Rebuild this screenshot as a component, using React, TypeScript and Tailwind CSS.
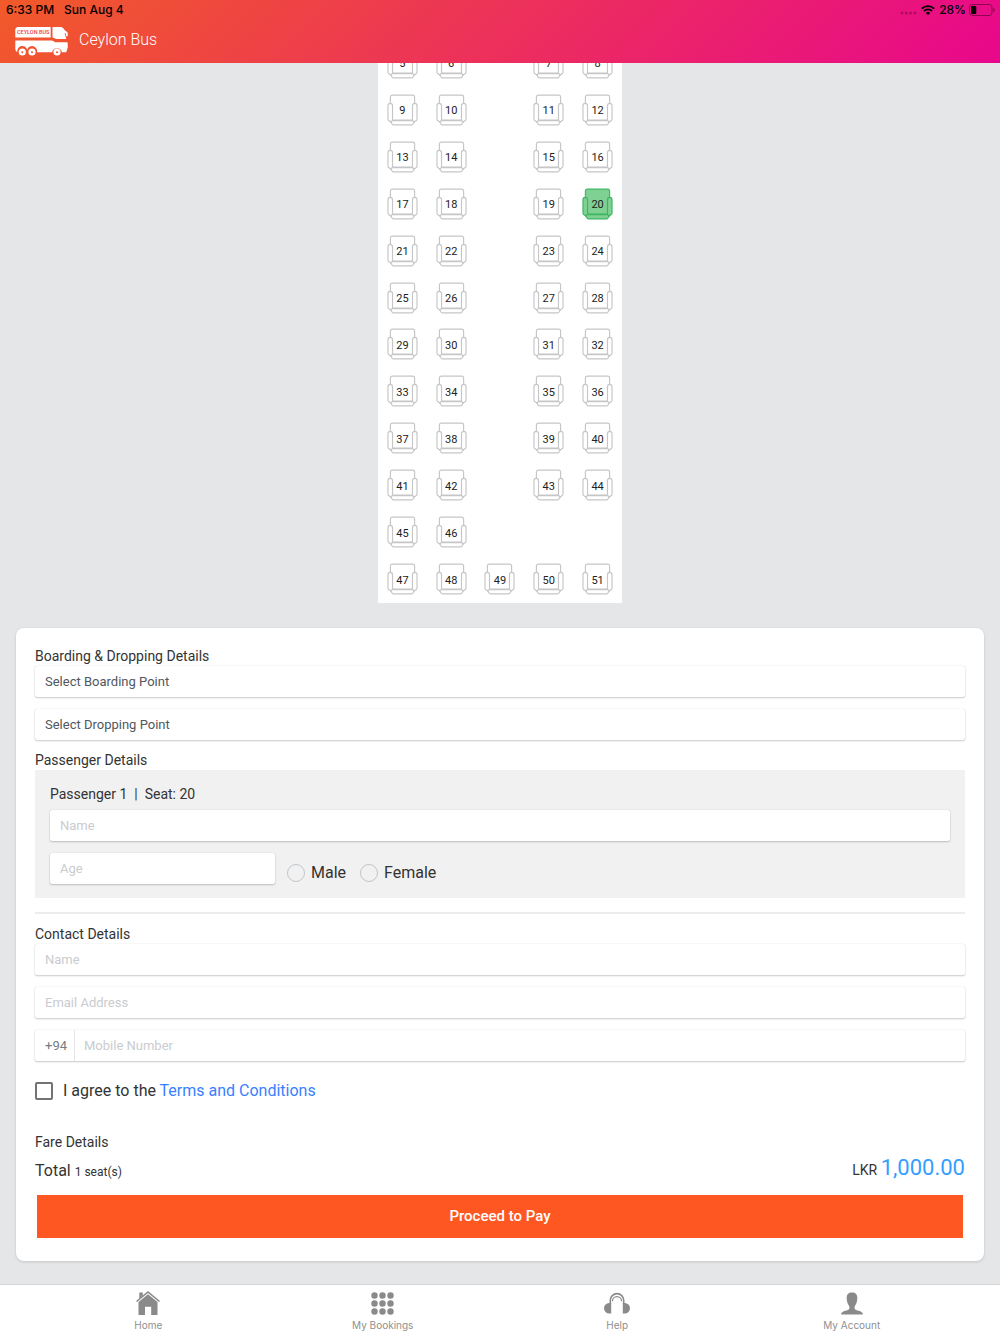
import React from 'react';

const seatRows: (number | null)[][] = [
  [5, 6, null, 7, 8],
  [9, 10, null, 11, 12],
  [13, 14, null, 15, 16],
  [17, 18, null, 19, 20],
  [21, 22, null, 23, 24],
  [25, 26, null, 27, 28],
  [29, 30, null, 31, 32],
  [33, 34, null, 35, 36],
  [37, 38, null, 39, 40],
  [41, 42, null, 43, 44],
  [45, 46, null, null, null],
  [47, 48, 49, 50, 51],
];

const fieldBox =
  'h-[31px] w-full rounded-xs bg-white px-2.5 text-[13px] shadow-[0_0_1px_rgba(0,0,0,0.2),0_1px_2px_rgba(0,0,0,0.2)] outline-none placeholder:text-[#c9cccf]';

function Seat({ number, selected }: { number: number; selected: boolean }) {
  return (
    <button
      type="button"
      aria-pressed={selected}
      aria-label={`Seat ${number}`}
      className="grid size-[31px] place-items-center"
    >
      <svg
        viewBox="0 1 32 32"
        className={
          selected
            ? 'col-start-1 row-start-1 size-[31px] overflow-visible fill-[#7fd093] stroke-[#3fb562]'
            : 'col-start-1 row-start-1 size-[31px] overflow-visible fill-white stroke-[#c6c6c8]'
        }
        strokeWidth="1.2"
        strokeLinejoin="round"
        aria-hidden="true"
      >
        <path d="M3.500 27V3.200a2 2 0 0 1 2-2h21a2 2 0 0 1 2 2V27z" />
        <path d="M5 27.500h22q1.200 0 1.200 1.200l-1.400 2.200q-.5 1-1.600 1H6.800q-1.100 0-1.600-1L3.800 28.700q0-1.200 1.200-1.200z" />
        <path d="M3.300 9.600q2.400 0 2.400 2.400v15l-1.700 1.900-2.300-1.500q-.7-.7-.7-1.700V12q0-2.400 2.300-2.400z" />
        <path d="M28.700 9.600q-2.400 0-2.400 2.400v15l1.700 1.900 2.300-1.500q.7-.7.7-1.700V12q0-2.400-2.300-2.400z" />
      </svg>
      <span className="col-start-1 row-start-1 pt-0.5 text-[11px] leading-4 text-[#222]">{number}</span>
    </button>
  );
}

function BusLogo() {
  return (
    <svg viewBox="0 0 54 31" className="h-[31px] w-[54px]" aria-hidden="true">
      <g fill="#fff">
        <path d="M3.500 2h32.200v10.500H.3V5.200Q.3 2 3.500 2z" />
        <path d="M37.500 2h8.500q2.500.2 3.800 3.200l2.700 2q.7 2.400-.2 4.300l-1.300-.4-.2-2.700-1.200-.4L51.300 14H41.500l-4-1.500z" />
        <path d="M.3 15.500H37l3.500 1.700h12q.5 3 .2 5.500l-1.500 4.500h-4.300a5 5 0 0 0-9.800 0H22a5 5 0 0 0-9.800-2.200A5 5 0 0 0 2.400 27Q.3 26.500.3 24z" />
        <circle cx="7.300" cy="27" r="3.600" />
        <circle cx="17" cy="27" r="3.600" />
        <circle cx="42" cy="27" r="3.600" />
      </g>
      <g fill="#f0542f">
        <circle cx="7.300" cy="27.300" r="1" />
        <circle cx="17" cy="27.300" r="1" />
        <circle cx="42" cy="27.300" r="1" />
      </g>
      <text x="2" y="9.300" fontSize="5.500" fontWeight="500" fontFamily="Roboto, sans-serif" fill="#ee3b4a">
        CEYLON BUS
      </text>
    </svg>
  );
}

function StatusBar() {
  return (
    <div className="flex h-5 items-center justify-between pr-[5px] pl-1.5 font-['Inter',sans-serif] text-xs font-medium text-black">
      <div className="flex gap-2.5">
        <span>6:33 PM</span>
        <span>Sun Aug 4</span>
      </div>
      <div className="flex items-center gap-1">
        <svg viewBox="0 0 17 4" className="mt-1.5 h-1 w-[17px]" fill="#000" fillOpacity="0.25" aria-hidden="true">
          <circle cx="2" cy="2" r="1.500" />
          <circle cx="6.300" cy="2" r="1.500" />
          <circle cx="10.600" cy="2" r="1.500" />
          <circle cx="14.900" cy="2" r="1.500" />
        </svg>
        <svg viewBox="0 0 14 10" className="h-2.5 w-3.5" fill="none" stroke="#000" strokeWidth="1.900" aria-hidden="true">
          <path d="M.8 3.700a8.800 8.800 0 0 1 12.400 0" />
          <path d="M3 6a5.700 5.700 0 0 1 8 0" />
          <path d="M7 10 4.900 7.900a3 3 0 0 1 4.200 0z" fill="#000" stroke="none" />
        </svg>
        <span>28%</span>
        <svg viewBox="0 0 26 12" className="-ml-px h-3 w-[26px]" aria-hidden="true">
          <rect x=".5" y=".5" width="22.500" height="11" rx="2.800" fill="none" stroke="#000" strokeOpacity="0.4" />
          <rect x="2" y="2" width="5.300" height="8" rx="1.300" />
          <path d="M24.300 4q1.500.5 1.500 2t-1.500 2z" fillOpacity="0.4" />
        </svg>
      </div>
    </div>
  );
}

function HomeIcon() {
  return (
    <svg viewBox="0 0 24 24" className="size-6" fill="#8a8a8a" aria-hidden="true">
      <path d="M3.300 1.600h3.500v3.200L3.300 8z" />
      <path d="M12 0 24 9.900l-1 1.200L12 2.100 1 11.100 0 9.900z" />
      <path d="M12 3.300 21.500 11.100V24h-6.300v-8.200H9V24H2.500V11.100z" />
    </svg>
  );
}

function GridIcon() {
  const steps = [3.5, 11.5, 19.5];
  return (
    <svg viewBox="0 0 23 23" className="size-[23px]" fill="#8a8a8a" aria-hidden="true">
      {steps.map((y) => steps.map((x) => <circle key={`${x}-${y}`} cx={x} cy={y} r="3.200" />))}
    </svg>
  );
}

function HelpIcon() {
  return (
    <svg viewBox="0 0 26 22" className="h-[22px] w-[26px]" aria-hidden="true">
      <path fill="#8a8a8a" d="M7.200 11v10.400H5.200a5.200 5.200 0 0 1 0-10.400zM18.800 11v10.400h2a5.200 5.200 0 0 0 0-10.400z" />
      <path fill="none" stroke="#8a8a8a" strokeWidth="1.600" d="M6.300 12V8.300a6.700 6.700 0 0 1 13.400 0V12" />
      <path fill="none" stroke="#8a8a8a" strokeWidth="1.200" d="M8.400 9.200a4.600 4.600 0 0 1 9.200 0" />
    </svg>
  );
}

function AccountIcon() {
  return (
    <svg viewBox="0 0 22 23" className="h-[23px] w-[22px]" fill="#8a8a8a" aria-hidden="true">
      <path d="M11 .5c3.500 0 5.500 2 5.300 5.500 0 2.500-.6 5.300-1.800 7-.8 1.200-1 1.600-.9 3 .1 1.400.8 2 2.800 2.500 3.600.8 5.300 1.600 5.600 4H0c.3-2.400 2-3.200 5.600-4 2-.5 2.700-1.100 2.800-2.500.1-1.400-.1-1.800-.9-3-1.200-1.700-1.800-4.500-1.800-7C5.500 2.500 7.500.5 11 .5z" />
    </svg>
  );
}

const tabs = [
  { label: 'Home', icon: <HomeIcon /> },
  { label: 'My Bookings', icon: <GridIcon /> },
  { label: 'Help', icon: <HelpIcon /> },
  { label: 'My Account', icon: <AccountIcon /> },
];

function GenderOption({ label }: { label: string }) {
  return (
    <label className="flex items-center gap-1.5 text-base text-[#333]">
      <input
        type="radio"
        name="gender"
        className="size-[18px] appearance-none rounded-full border border-[#c0c6ca] checked:border-[5px] checked:border-[#3b82f6]"
      />
      {label}
    </label>
  );
}

function SectionTitle({ children }: { children: React.ReactNode }) {
  return <h2 className="text-sm leading-5 text-[#333]">{children}</h2>;
}

export default function App() {
  return (
    <div className="flex min-h-screen flex-col bg-[#e5e6e8] font-['Roboto',sans-serif] text-[#333]">
      <header className="z-10 h-[63px] bg-[linear-gradient(135deg,#f15a29,#e8078c)]">
        <StatusBar />
        <div className="flex h-10 items-center gap-2.5 pl-[15px]">
          <BusLogo />
          <h1 className="text-base font-light text-white">Ceylon Bus</h1>
        </div>
      </header>

      <main className="flex-1 px-4 pb-[23px]">
        <section
          aria-label="Seat map"
          className="mx-auto -mt-[23px] grid h-[563px] w-[244px] auto-rows-fr bg-white"
        >
          {seatRows.map((row, r) => (
            <div key={r} className="grid grid-cols-5 place-items-center">
              {row.map((n, c) => (n === null ? <span key={c} /> : <Seat key={c} number={n} selected={n === 20} />))}
            </div>
          ))}
        </section>

        <form
          onSubmit={(e) => e.preventDefault()}
          className="mt-[25px] rounded-lg bg-white px-[19px] pt-[18px] pb-[23px] shadow-[0_1px_3px_rgba(0,0,0,0.15)]"
        >
          <SectionTitle>Boarding &amp; Dropping Details</SectionTitle>
          <div className="flex flex-col gap-3">
            <select aria-label="Boarding point" className={`${fieldBox} appearance-none text-[#50575e]`}>
              <option>Select Boarding Point</option>
            </select>
            <select aria-label="Dropping point" className={`${fieldBox} appearance-none text-[#50575e]`}>
              <option>Select Dropping Point</option>
            </select>
          </div>

          <div className="mt-2.5">
            <SectionTitle>Passenger Details</SectionTitle>
          </div>
          <div className="bg-[#f1f1f1] px-[15px] pt-3.5 pb-[13px]">
            <h3 className="text-sm leading-5 whitespace-pre">{'Passenger 1  |  Seat: 20'}</h3>
            <input aria-label="Passenger name" placeholder="Name" className={`${fieldBox} mt-1.5 block`} />
            <div className="mt-3 flex items-start">
              <div className="w-1/4">
                <input aria-label="Age" placeholder="Age" className={`${fieldBox} block`} />
              </div>
              <div className="mt-2 ml-3 flex gap-3.5">
                <GenderOption label="Male" />
                <GenderOption label="Female" />
              </div>
            </div>
          </div>

          <hr className="mt-3.5 mb-2.5 border-t-2 border-[#ececec]" />

          <SectionTitle>Contact Details</SectionTitle>
          <div className="flex flex-col gap-3">
            <input aria-label="Contact name" placeholder="Name" className={fieldBox} />
            <input aria-label="Email address" type="email" placeholder="Email Address" className={fieldBox} />
            <div className="flex h-[31px] items-stretch rounded-xs text-[13px] shadow-[0_0_1px_rgba(0,0,0,0.2),0_1px_2px_rgba(0,0,0,0.2)]">
              <span className="flex items-center border-r border-[#e6e6e6] pr-[7px] pl-2.5 text-[#777c80]">+94</span>
              <input
                aria-label="Mobile number"
                type="tel"
                placeholder="Mobile Number"
                className="min-w-0 flex-1 px-[9px] outline-none placeholder:text-[#c9cccf]"
              />
            </div>
          </div>

          <div className="mt-[18px] flex items-center gap-2.5 text-base leading-6">
            <input
              id="agree"
              type="checkbox"
              className="size-[18px] appearance-none rounded-xs border-2 border-[#737373] checked:bg-[#737373]"
            />
            <label htmlFor="agree">
              I agree to the{' '}
              <a href="#terms" className="text-[#3880ff]">
                Terms and Conditions
              </a>
            </label>
          </div>

          <div className="mt-[29px]">
            <SectionTitle>Fare Details</SectionTitle>
          </div>
          <div className="flex items-end justify-between">
            <p className="text-base leading-6">
              Total <span className="text-xs">1 seat(s)</span>
            </p>
            <p className="text-sm">
              LKR <span className="text-[22px] leading-[31px] text-[#349eff]">1,000.00</span>
            </p>
          </div>
          <div className="mx-0.5 mt-3">
            <button type="submit" className="block h-[43px] w-full bg-[#ff5722] text-[15px] font-medium text-white">
              Proceed to Pay
            </button>
          </div>
        </form>
      </main>

      <nav className="grid h-[50px] grid-cols-4 border-t border-[#d5d6d8] bg-white px-[31px]">
        {tabs.map((tab) => (
          <a
            key={tab.label}
            href="#tab"
            className="flex flex-col items-center font-['Inter',sans-serif] text-[10px] leading-3 text-[#8f8f8f]"
          >
            <span className="flex h-[34px] items-center pt-0.5">{tab.icon}</span>
            {tab.label}
          </a>
        ))}
      </nav>
    </div>
  );
}
